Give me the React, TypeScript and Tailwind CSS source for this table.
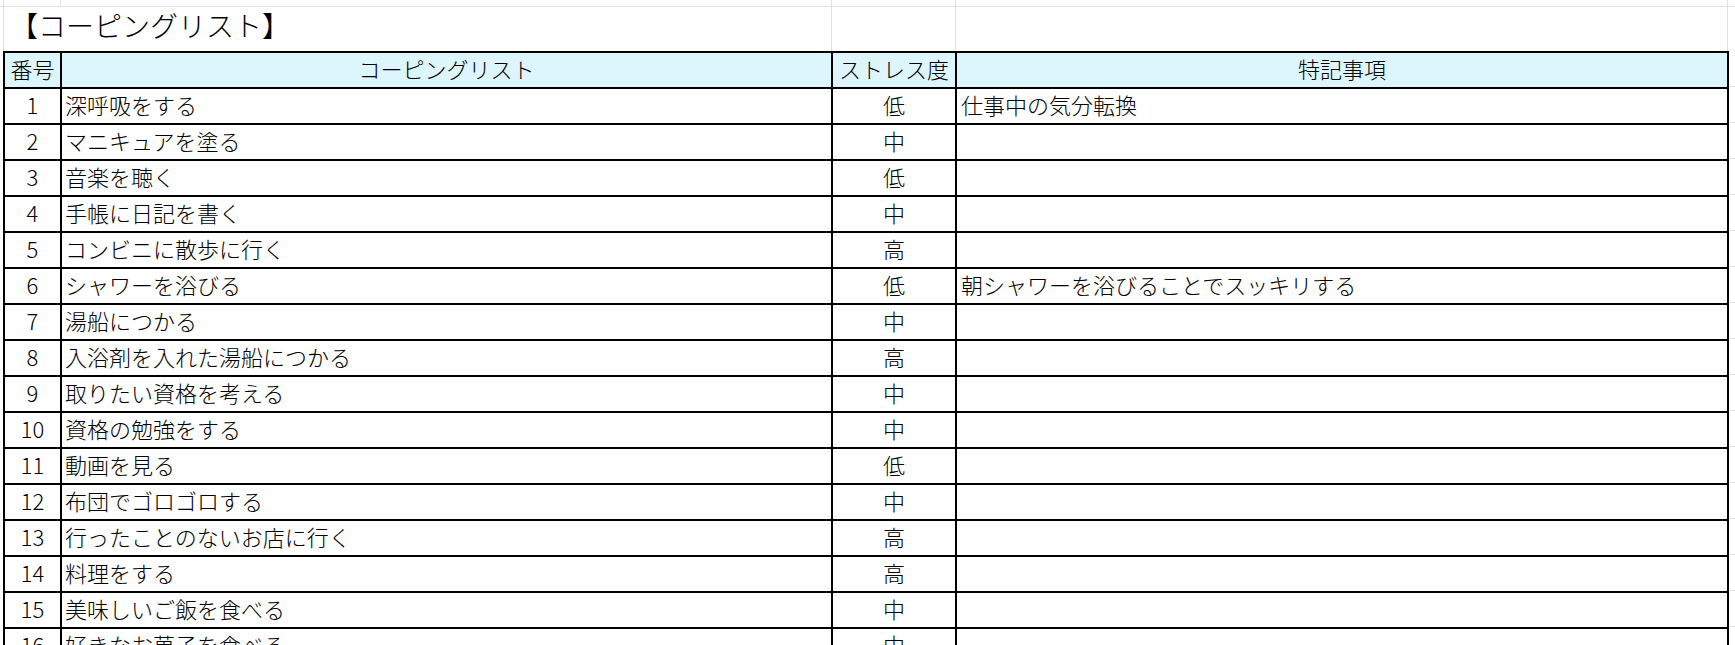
import React from 'react';

type Row = { no: number; item: string; level: string; note?: string };

const rows: Row[] = [
  { no: 1, item: '深呼吸をする', level: '低', note: '仕事中の気分転換' },
  { no: 2, item: 'マニキュアを塗る', level: '中' },
  { no: 3, item: '音楽を聴く', level: '低' },
  { no: 4, item: '手帳に日記を書く', level: '中' },
  { no: 5, item: 'コンビニに散歩に行く', level: '高' },
  { no: 6, item: 'シャワーを浴びる', level: '低', note: '朝シャワーを浴びることでスッキリする' },
  { no: 7, item: '湯船につかる', level: '中' },
  { no: 8, item: '入浴剤を入れた湯船につかる', level: '高' },
  { no: 9, item: '取りたい資格を考える', level: '中' },
  { no: 10, item: '資格の勉強をする', level: '中' },
  { no: 11, item: '動画を見る', level: '低' },
  { no: 12, item: '布団でゴロゴロする', level: '中' },
  { no: 13, item: '行ったことのないお店に行く', level: '高' },
  { no: 14, item: '料理をする', level: '高' },
  { no: 15, item: '美味しいご飯を食べる', level: '中' },
  { no: 16, item: '好きなお菓子を食べる', level: '中' },
];

const App = () => {
  return (
    <div
      className="w-[1735px] h-[645px] overflow-hidden bg-white text-black font-light"
      style={{ fontFamily: '"Noto Sans CJK JP", "Noto Sans", sans-serif' }}
    >
      {/* sheet gridlines above the table */}
      <div className="flex h-[7px] border-b border-[#e1e1e1]">
        <div className="w-[4px] border-r border-[#e1e1e1]" />
        <div className="w-[57px] border-r border-[#e1e1e1]" />
        <div className="w-[771px] border-r border-[#e1e1e1]" />
        <div className="w-[124px] border-r border-[#e1e1e1]" />
        <div className="w-[772px] border-r border-[#e1e1e1]" />
      </div>
      <div className="flex h-[44px]">
        <div className="w-[4px] border-r border-[#e1e1e1]" />
        <div className="w-[828px] border-r border-[#e1e1e1] flex items-center pl-[6px] pb-[8px] text-[28px] leading-none whitespace-nowrap">
          【コーピングリスト】
        </div>
        <div className="w-[124px] border-r border-[#e1e1e1]" />
        <div className="w-[772px] border-r border-[#e1e1e1]" />
      </div>

      {/* table */}
      <div className="flex">
        <div className="w-[3px] shrink-0" />
        <div className="border-l-2 border-t-2 border-black text-[22px] leading-none">
          <div className="flex h-[36px] bg-[#ddf5fc]">
            <div className="w-[57px] border-r-2 border-b-2 border-black flex items-center justify-center pb-[5px]">番号</div>
            <div className="w-[771px] border-r-2 border-b-2 border-black flex items-center justify-center pb-[5px]">コーピングリスト</div>
            <div className="w-[124px] border-r-2 border-b-2 border-black flex items-center justify-center pb-[5px]">ストレス度</div>
            <div className="w-[772px] border-r-2 border-b-2 border-black flex items-center justify-center pb-[5px]">特記事項</div>
          </div>
          {rows.map(row => (
            <div key={row.no} className="flex h-[36px]">
              <div className="w-[57px] border-r-2 border-b-2 border-black flex items-center justify-center pb-[5px]">{row.no}</div>
              <div className="w-[771px] border-r-2 border-b-2 border-black flex items-center pl-[3px] pb-[5px] whitespace-nowrap">{row.item}</div>
              <div className="w-[124px] border-r-2 border-b-2 border-black flex items-center justify-center pb-[5px]">{row.level}</div>
              <div className="w-[772px] border-r-2 border-b-2 border-black flex items-center pl-[4px] pb-[5px] whitespace-nowrap">{row.note}</div>
            </div>
          ))}
        </div>
        <div className="flex-1">
          {[...Array(17)].map((_, i) => (
            <div key={i} className="h-[36px] border-b border-[#e1e1e1]" />
          ))}
        </div>
      </div>
    </div>
  );
};

export default App;
